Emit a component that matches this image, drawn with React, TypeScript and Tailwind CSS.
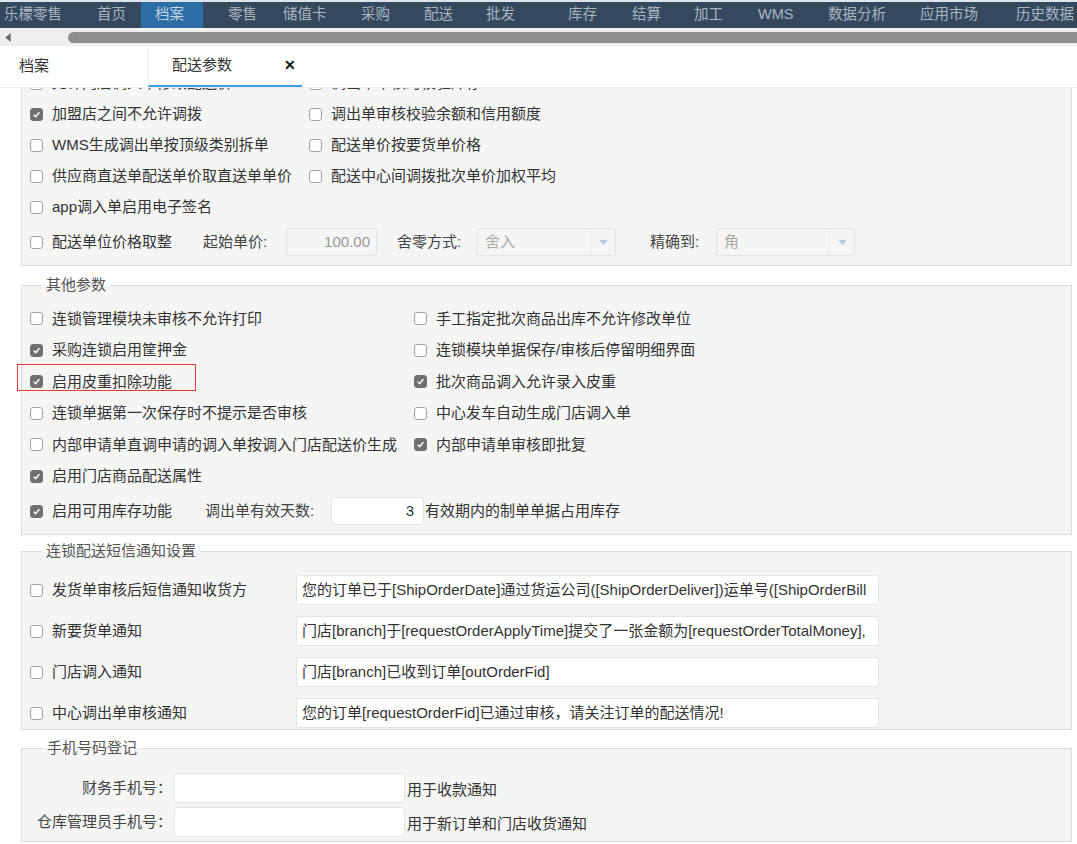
import React from 'react';

const FONT = { fontFamily: '"Liberation Sans", "Noto Sans CJK SC", sans-serif' };

// top navigation: [label, width, paddingLeft, active]
const navItems: [string, number, number, boolean?][] = [
  ['乐檬零售', 97, 4],
  ['首页', 44, 0],
  ['档案', 62, 14, true],
  ['零售', 80, 25],
  ['储值卡', 78, 0],
  ['采购', 63, 0],
  ['配送', 62, 0],
  ['批发', 82, 0],
  ['库存', 64, 0],
  ['结算', 62, 0],
  ['加工', 64, 0],
  ['WMS', 70, 0],
  ['数据分析', 92, 0],
  ['应用市场', 96, 0],
  ['历史数据', 80, 0],
];

const Box = ({ checked }: { checked?: boolean }) => (
  <span
    className={`flex h-[13px] w-[13px] shrink-0 items-center justify-center rounded-[3px] border ${
      checked ? 'border-[#707070] bg-[#707070]' : 'border-[#a3a3a3] bg-white'
    }`}
  >
    {checked && (
      <svg viewBox="0 0 10 10" className="h-[9px] w-[9px]">
        <path d="M2 5.3 L4.1 7.4 L8.2 2.6" fill="none" stroke="white" strokeWidth="1.7" />
      </svg>
    )}
  </span>
);

const Check = ({ label, checked, className = '' }: { label: string; checked?: boolean; className?: string }) => (
  <div className={`flex items-center gap-[9px] whitespace-nowrap ${className}`}>
    <Box checked={checked} />
    <span>{label}</span>
  </div>
);

const Select = ({ value }: { value: string }) => (
  <div className="flex h-[28px] w-[139px] items-center rounded-[3px] border border-[#e2e2e2] bg-[#f5f5f5]">
    <span className="flex-1 pl-[7px] text-[#aaaaaa]">{value}</span>
    <span className="flex h-full w-[25px] items-center justify-center border-l border-[#ececec]">
      <svg viewBox="0 0 10 6" className="h-[5px] w-[9px]">
        <path d="M0 0 L10 0 L5 6 Z" fill="#aecbe7" />
      </svg>
    </span>
  </div>
);

const Fieldset = ({ legend, className = '', children }: { legend?: string; className?: string; children: React.ReactNode }) => (
  <fieldset className={`min-w-0 border border-[#d9dbe3] bg-[#f5f5f5] ${className}`}>
    {legend && <legend className="ml-[12px] px-[4px] text-[15px] leading-[20px] text-[#555]">{legend}</legend>}
    {children}
  </fieldset>
);

const basicRows: [string, boolean, string?, boolean?][] = [
  ['允许门店调入单修改配送价', false, '调出单审核时校验库存', false],
  ['加盟店之间不允许调拨', true, '调出单审核校验余额和信用额度', false],
  ['WMS生成调出单按顶级类别拆单', false, '配送单价按要货单价格', false],
  ['供应商直送单配送单价取直送单单价', false, '配送中心间调拨批次单价加权平均', false],
  ['app调入单启用电子签名', false],
];

const otherRows: [string, boolean, string?, boolean?][] = [
  ['连锁管理模块未审核不允许打印', false, '手工指定批次商品出库不允许修改单位', false],
  ['采购连锁启用筐押金', true, '连锁模块单据保存/审核后停留明细界面', false],
  ['启用皮重扣除功能', true, '批次商品调入允许录入皮重', true],
  ['连锁单据第一次保存时不提示是否审核', false, '中心发车自动生成门店调入单', false],
  ['内部申请单直调申请的调入单按调入门店配送价生成', false, '内部申请单审核即批复', true],
  ['启用门店商品配送属性', true],
];

const smsRows = [
  ['发货单审核后短信通知收货方', '您的订单已于[ShipOrderDate]通过货运公司([ShipOrderDeliver])运单号([ShipOrderBill'],
  ['新要货单通知', '门店[branch]于[requestOrderApplyTime]提交了一张金额为[requestOrderTotalMoney],'],
  ['门店调入通知', '门店[branch]已收到订单[outOrderFid]'],
  ['中心调出单审核通知', '您的订单[requestOrderFid]已通过审核，请关注订单的配送情况!'],
];

export default function App() {
  return (
    <div className="h-[844px] w-[1077px] overflow-hidden bg-white text-[15px] text-[#333]" style={FONT}>
      {/* top navigation */}
      <div className="flex h-[28px] border-t-2 border-[#dfe4ea] bg-[#34495e] text-[14.5px] text-[#aab5c1]">
        {navItems.map(([label, w, pl, active]) => (
          <div
            key={label}
            className={`flex h-full shrink-0 items-center whitespace-nowrap ${active ? 'bg-[#2c6da6] text-[#c6d3e0]' : ''}`}
            style={{ width: w, paddingLeft: pl }}
          >
            {label}
          </div>
        ))}
      </div>

      {/* horizontal scroller */}
      <div className="flex h-[18px] items-center border-t border-[#fafafa] bg-[#efefef]">
        <svg viewBox="0 0 6 10" className="ml-[5px] h-[9px] w-[6px]">
          <path d="M6 0 L6 10 L0 5 Z" fill="#6a6a6a" />
        </svg>
        <div className="ml-[57px] h-[11px] flex-1 rounded-l-full bg-[#8d8d8d]" />
      </div>

      {/* tabs */}
      <div className="flex h-[42px] border-b border-[#eeeeee] bg-white">
        <div className="flex w-[148px] items-center pl-[19px] text-[15px]">档案</div>
        <div className="flex w-[154px] items-center border-b-2 border-l border-b-[#3d9fe3] border-l-[#eeeeee] pl-[23px]">
          <span className="text-[15px]">配送参数</span>
          <span className="ml-auto mr-[6px] text-[14px] font-bold text-[#111]">✕</span>
        </div>
      </div>

      {/* scrolled content */}
      <div className="h-[757px] overflow-hidden bg-white">
        <div className="-mt-[22px] pl-[21px] pr-[5px]">
          <Fieldset className="pb-[4px] pl-[8px] pt-[1px]">
            {basicRows.map(([a, ac, b, bc]) => (
              <div key={a} className="flex h-[31px] items-center">
                <Check label={a} checked={ac} className="w-[279px]" />
                {b && <Check label={b} checked={bc} />}
              </div>
            ))}
            <div className="flex h-[38px] items-center whitespace-nowrap">
              <Check label="配送单位价格取整" className="w-[173px]" />
              <span className="w-[83px] text-[#444]">起始单价:</span>
              <div className="flex h-[28px] w-[91px] items-center justify-end rounded-[3px] border border-[#e2e2e2] bg-[#f5f5f5] pr-[6px] text-[#9a9a9a]">
                100.00
              </div>
              <span className="ml-[20px] w-[80px] text-[#444]">舍零方式:</span>
              <Select value="舍入" />
              <span className="ml-[34px] w-[66px] text-[#444]">精确到:</span>
              <Select value="角" />
            </div>
          </Fieldset>

          <Fieldset legend="其他参数" className="mt-[9px] pb-[4px] pl-[8px] pt-[8px]">
            {otherRows.map(([a, ac, b, bc]) => (
              <div key={a} className="flex h-[31.5px] items-center">
                <div className="relative w-[384px]">
                  <Check label={a} checked={ac} />
                  {a === '启用皮重扣除功能' && (
                    <div className="absolute -left-[13px] -top-[7px] h-[27px] w-[179px] border-[length:1.5px] border-solid border-[color:#e53935]" />
                  )}
                </div>
                {b && <Check label={b} checked={bc} />}
              </div>
            ))}
            <div className="flex h-[38px] items-center whitespace-nowrap">
              <Check label="启用可用库存功能" checked className="w-[175px]" />
              <span className="w-[126px] text-[#444]">调出单有效天数:</span>
              <div className="flex h-[28px] w-[93px] items-center justify-end rounded-[3px] border border-[#e2e2e2] bg-white pr-[9px]">
                3
              </div>
              <span className="ml-[1px]">有效期内的制单单据占用库存</span>
            </div>
          </Fieldset>

          <Fieldset legend="连锁配送短信通知设置" className="mt-[6px] flex flex-col gap-[11px] pb-[1px] pl-[8px] pt-[14px]">
            {smsRows.map(([label, text]) => (
              <div key={label} className="flex h-[30px] items-center">
                <Check label={label} className="w-[266px]" />
                <div className="flex h-[30px] w-[583px] items-center overflow-hidden whitespace-nowrap rounded-[3px] border border-[#e4e4e4] bg-white pl-[5px] text-[15px]">
                  {text}
                </div>
              </div>
            ))}
          </Fieldset>

          <Fieldset legend="手机号码登记" className="mt-[8px] flex flex-col gap-[4px] pb-[4px] pl-[9px] pt-[15px]">
            {[
              ['财务手机号：', '用于收款通知'],
              ['仓库管理员手机号：', '用于新订单和门店收货通知'],
            ].map(([label, note]) => (
              <div key={label} className="flex h-[30px] items-center whitespace-nowrap">
                <span className="w-[141px] text-right text-[#444]">{label}</span>
                <div className="ml-[2px] h-[30px] w-[231px] rounded-[3px] border border-[#e4e4e4] bg-white" />
                <span className="ml-[2px] mt-[4px]">{note}</span>
              </div>
            ))}
          </Fieldset>
        </div>
      </div>
    </div>
  );
}
